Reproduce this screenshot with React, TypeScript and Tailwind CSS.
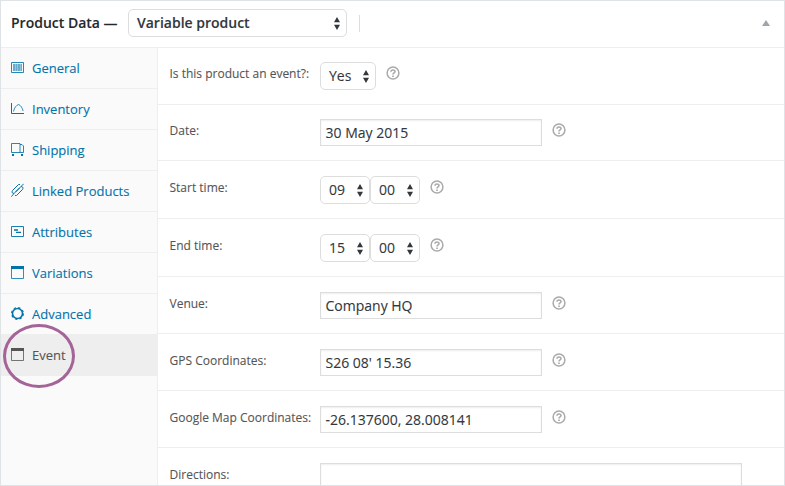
import React from 'react';

type IconName = 'general' | 'inventory' | 'shipping' | 'linked' | 'attributes' | 'window' | 'advanced';

function TabIcon({ name }: { name: IconName }) {
  return (
    <svg width="13" height="14" viewBox="0 0 13 14" fill="none" stroke="currentColor" className="mb-[2px] shrink-0">
      {name === 'general' && (
        <>
          <path d="M.5 2.500h12v10H.5z" strokeOpacity=".85" />
          <path d="M2 4h2v7H2zM5 4h1v7H5zM7 4h2v7H7zM10 4h1v7h-1z" fill="currentColor" fillOpacity=".3" stroke="none" />
          <path d="M2 4h9v7H2z" fill="currentColor" fillOpacity=".4" stroke="none" />
        </>
      )}
      {name === 'inventory' && (
        <>
          <path d="M.5 2v10.500H13" />
          <path d="M2.500 10.500C3.500 6.500 5 4.500 7.500 3.500C10 4.500 11 6.500 12.200 10" strokeOpacity=".8" />
        </>
      )}
      {name === 'shipping' && (
        <>
          <path d="M.5 1.500H9v9H.5zM9 2.500h2L12.500 4v6.500H9" strokeOpacity=".85" />
          <path d="M1 12h2v2H1zM10 12h2v2h-2z" fill="currentColor" stroke="none" />
        </>
      )}
      {name === 'linked' && (
        <path d="M7.500 1.500L2 7C1 8 .8 9 1.500 10L3 10.500L8.500 5M5.500 12.500L11 7C12.200 5.800 12.200 5 11.500 4L10 3.500L4.500 9M.3 13.700L3 10.500M10 3.500L12.700 .8M7.500 1.500H9M5.500 12.500H4" />
      )}
      {name === 'attributes' && (
        <>
          <path d="M.5 2.500h12v10H.5z" strokeOpacity=".9" />
          <path d="M3 6h4M5 8.300h5" strokeWidth="1.300" />
        </>
      )}
      {name === 'window' && (
        <>
          <path d="M.5 3h12v10.500H.5z" strokeOpacity=".8" />
          <path d="M0 1h13v3H0z" fill="currentColor" stroke="none" />
        </>
      )}
      {name === 'advanced' && (
        <>
          <circle cx="6.500" cy="7.500" r="5" strokeWidth="1.600" />
          <circle cx="6.500" cy="7.500" r="5.900" strokeWidth="1.100" strokeDasharray="2.320 2.320" />
        </>
      )}
    </svg>
  );
}

function Arrows() {
  return (
    <svg width="6" height="13" viewBox="0 0 6 13" className="shrink-0 fill-[#32373c]">
      <path d="M3 0L6 5.300H0zM3 13L0 7.700h6z" />
    </svg>
  );
}

function Select({ value, className }: { value: string; className: string }) {
  return (
    <div className={`flex h-7 shrink-0 items-center justify-between rounded-[5px] border border-[#ddd] bg-white pr-[6px] pl-2 text-sm leading-none text-[#32373c] ${className}`}>
      <span>{value}</span>
      <Arrows />
    </div>
  );
}

function Help() {
  return (
    <svg width="14" height="14" viewBox="0 0 14 14" fill="none" className="shrink-0 stroke-[#aaa]">
      <circle cx="7" cy="7" r="5.900" strokeWidth="1.500" />
      <path d="M5 5.700C5 3.500 9 3.500 9 5.600C9 7 7 6.800 7 8.500" strokeWidth="1.600" />
      <path d="M7 9.400v1.500" strokeWidth="1.700" />
    </svg>
  );
}

function Input({ value }: { value: string }) {
  return (
    <div className="flex h-[27px] w-[222px] items-center border border-[#ddd] bg-white pl-[4.500px] text-sm leading-none text-[#32373c] shadow-[inset_0_1px_2px_rgba(0,0,0,0.07)]">
      {value}
    </div>
  );
}

function Row({ label, height, labelPad = 'pt-[18px]', children }: { label: string; height: string; labelPad?: string; children: React.ReactNode }) {
  return (
    <div className={`flex shrink-0 items-start border-b border-[#eee] pl-[11.500px] ${height}`}>
      <div className={`w-[150.500px] shrink-0 text-xs leading-[18px] whitespace-nowrap text-[#555] ${labelPad}`}>{label}</div>
      <div className="flex items-start pt-[14px]">{children}</div>
    </div>
  );
}

const tabs: { label: string; icon: IconName }[] = [
  { label: 'General', icon: 'general' },
  { label: 'Inventory', icon: 'inventory' },
  { label: 'Shipping', icon: 'shipping' },
  { label: 'Linked Products', icon: 'linked' },
  { label: 'Attributes', icon: 'attributes' },
  { label: 'Variations', icon: 'window' },
  { label: 'Advanced', icon: 'advanced' },
];

export default function App() {
  return (
    <div className="flex h-[486px] w-[785px] flex-col overflow-hidden border border-[#dfe3e6] bg-white font-['Open_Sans',sans-serif] [-webkit-text-stroke:0.1px]">
      <header className="flex h-[47px] shrink-0 items-center border-b border-[#eee] pb-[2px] pl-[10px]">
        <h2 className="w-[117px] text-sm font-semibold whitespace-nowrap text-[#23282d]">Product Data —</h2>
        <Select value="Variable product" className="w-[219px] font-semibold" />
        <div className="ml-3 h-[17px] w-px bg-[#ddd]" />
        <svg width="8" height="6" viewBox="0 0 8 6" className="mr-[14px] ml-auto fill-[#a0a5aa]">
          <path d="M4 0L8 6H0z" />
        </svg>
      </header>
      <div className="flex min-h-0 flex-1">
        <nav className="relative w-[157px] shrink-0 border-r border-[#eee] bg-[#fafafa] text-[13px]">
          {tabs.map((t) => (
            <div key={t.label} className="flex h-[41px] items-center gap-2 border-b border-[#eee] pl-[10px] text-[#0073aa]">
              <TabIcon name={t.icon} />
              <span className="pt-[2px]">{t.label}</span>
            </div>
          ))}
          <div className="-mt-px flex h-[42px] items-center gap-2 bg-[#eee] pl-[10px] text-[#555]">
            <TabIcon name="window" />
            <span className="pt-px">Event</span>
          </div>
          <div className="absolute top-[276px] left-[2px] h-[64px] w-[72px] rounded-[50%] border-3 border-[#a46497]" />
        </nav>
        <main className="flex min-w-0 flex-1 flex-col overflow-hidden">
          <Row label="Is this product an event?:" height="h-[57px]" labelPad="pt-[17px]">
            <Select value="Yes" className="w-14" />
            <div className="ml-[10px] pt-1"><Help /></div>
          </Row>
          <Row label="Date:" height="h-[56px]" labelPad="pt-[17px]">
            <Input value="30 May 2015" />
            <div className="ml-[10px] pt-1"><Help /></div>
          </Row>
          <Row label="Start time:" height="h-[58px]">
            <div className="flex pt-px">
              <Select value="09" className="w-[50px]" />
              <Select value="00" className="w-[50px]" />
            </div>
            <div className="ml-[10px] pt-[5px]"><Help /></div>
          </Row>
          <Row label="End time:" height="h-[58px]">
            <div className="flex pt-px">
              <Select value="15" className="w-[50px]" />
              <Select value="00" className="w-[50px]" />
            </div>
            <div className="ml-[10px] pt-[5px]"><Help /></div>
          </Row>
          <Row label="Venue:" height="h-[57px]">
            <div className="pt-px"><Input value="Company HQ" /></div>
            <div className="ml-[10px] pt-[5px]"><Help /></div>
          </Row>
          <Row label="GPS Coordinates:" height="h-[57px]">
            <div className="pt-px"><Input value="S26 08' 15.36" /></div>
            <div className="ml-[10px] pt-[5px]"><Help /></div>
          </Row>
          <Row label="Google Map Coordinates:" height="h-[57px]">
            <div className="pt-px"><Input value="-26.137600, 28.008141" /></div>
            <div className="ml-[10px] pt-[5px]"><Help /></div>
          </Row>
          <Row label="Directions:" height="h-[100px]">
            <div className="mt-px h-20 w-[422px] border border-[#ddd] bg-white shadow-[inset_0_1px_2px_rgba(0,0,0,0.07)]" />
          </Row>
        </main>
      </div>
    </div>
  );
}
